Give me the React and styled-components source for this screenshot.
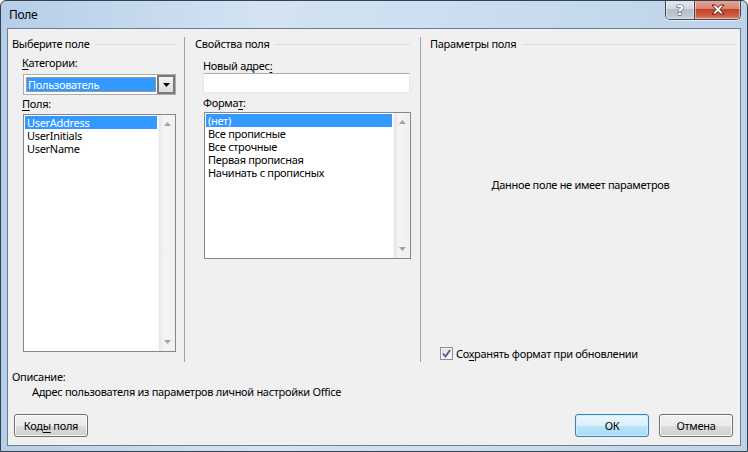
import React from "react";
import styled, { createGlobalStyle } from "styled-components";

const Global = createGlobalStyle`
  html, body { margin: 0; padding: 0; width: 748px; height: 452px; overflow: hidden; background: #fff; }
  * { box-sizing: border-box; }
  body { font-family: "Segoe UI", "Noto Sans", "Liberation Sans", sans-serif; font-size: 11px; letter-spacing: -0.3px; color: #000; }
`;

const Window = styled.div`
  width: 748px;
  height: 452px;
  border: 1px solid #34414f;
  border-radius: 6px 6px 0 0;
  background: linear-gradient(to right, #b6cee8 0%, #d3e3f3 35%, #c9dcef 70%, #bcd3ea 100%);
  display: flex;
  flex-direction: column;
  overflow: hidden;
`;

const TitleBar = styled.div`
  height: 27px;
  display: flex;
  align-items: flex-start;
  justify-content: space-between;
  padding-left: 8px;
  padding-right: 6px;
`;

const Title = styled.div`
  font-size: 12px;
  line-height: 14px;
  margin-top: 7px;
`;

const CaptionButtons = styled.div`
  display: flex;
  margin-top: -1px;
  border: 1px solid #3c4a5a;
  border-top: none;
  border-radius: 0 0 5px 5px;
  overflow: hidden;
  height: 20px;
  box-shadow: 0 1px 0 rgba(255,255,255,0.6);
`;

const CaptionButton = styled.div`
  height: 19px;
  width: ${p => p.$w}px;
  display: flex;
  align-items: center;
  justify-content: center;
  background: ${p => p.$close
    ? "linear-gradient(#e8a99a 0%, #d98572 45%, #c4432d 50%, #cf5a3e 80%, #e08a6a 100%)"
    : "linear-gradient(#e2e7ec 0%, #d2dae2 45%, #b3bfcb 50%, #bac6d2 80%, #c9d4df 100%)"};
  border-left: ${p => p.$close ? "1px solid #5a3a3a" : "none"};
  box-shadow: inset 0 0 0 1px rgba(255,255,255,0.45);
`;

const HelpGlyph = styled.span`
  font-family: "DejaVu Sans", sans-serif;
  font-weight: bold;
  font-size: 14px;
  line-height: 14px;
  letter-spacing: 0;
  color: #fff;
  -webkit-text-stroke: 1px #3d4b5c;
  paint-order: stroke fill;
`;

const Client = styled.div`
  margin: 0 6px;
  height: 418px;
  border: 1px solid #6e7e90;
  background: #f0f0f0;
  display: flex;
  flex-direction: column;
`;

const Panels = styled.div`
  margin-top: 8px;
  height: 325px;
  display: grid;
  grid-template-columns: 176px 236px 1fr;
`;

const Column = styled.div`
  display: flex;
  flex-direction: column;
  border-left: ${p => p.$sep ? "1px solid #a0a0a0" : "none"};
  padding-left: ${p => p.$pl}px;
  padding-right: ${p => p.$pr}px;
`;

const GroupHeading = styled.div`
  height: 14px;
  line-height: 14px;
  display: flex;
  align-items: center;
  gap: 6px;
  white-space: nowrap;
  &::after {
    content: "";
    flex: 1;
    height: 1px;
    background: #d5dfe5;
  }
`;

const Indent = styled.div`
  display: flex;
  flex-direction: column;
  padding-left: ${p => p.$pl}px;
`;

const Label = styled.div`
  height: 14px;
  line-height: 14px;
  margin-top: ${p => p.$mt}px;
  margin-bottom: ${p => p.$mb || 0}px;
  white-space: nowrap;
`;

const U = styled.span`
  text-decoration: underline;
  text-underline-offset: 2px;
`;

const Combo = styled.div`
  margin-left: 1px;
  width: 153px;
  height: 21px;
  border: 1px solid #abadb3;
  background: #fff;
  padding: 1px;
  display: flex;
  align-items: stretch;
`;

const ComboField = styled.div`
  flex: 1;
  margin: 1px;
  background: #3399ff;
  color: #fff;
  border: 1px dotted #e8a040;
  line-height: 13px;
  padding-left: 1px;
`;

const ComboButton = styled.div`
  width: 18px;
  border: 2px solid #7a7a7a;
  background: linear-gradient(#f4f4f4, #dcdcdc);
  display: flex;
  align-items: center;
  justify-content: center;
  margin: -1px -1px -1px 0;
`;

const ListBox = styled.div`
  margin-left: 1px;
  width: ${p => p.$w}px;
  height: ${p => p.$h}px;
  border: 1px solid #828790;
  background: #fff;
  display: flex;
  padding: 1px;
`;

const ListItems = styled.div`
  flex: 1;
  display: flex;
  flex-direction: column;
`;

const ListItem = styled.div`
  height: 13px;
  line-height: 13px;
  padding-left: 2px;
  white-space: nowrap;
  background: ${p => p.$sel ? "#3399ff" : "transparent"};
  color: ${p => p.$sel ? "#fff" : "#000"};
`;

const ScrollBar = styled.div`
  width: 17px;
  margin: -1px -1px -1px 1px;
  background: linear-gradient(to right, #e6e6e6, #f4f4f4 30%, #f0f0f0);
  border-left: 1px solid #f8f8f8;
  display: flex;
  flex-direction: column;
  justify-content: space-between;
  align-items: center;
  padding: 7px 0 7px;
`;

const TextInput = styled.div`
  width: 207px;
  height: 20px;
  border: 1px solid #e3e9ef;
  border-top-color: #abadb3;
  background: #fff;
`;

const Message = styled.div`
  margin-top: 127px;
  text-align: center;
  height: 14px;
  line-height: 14px;
  padding-right: 4px;
`;

const CheckRow = styled.div`
  margin-top: auto;
  margin-bottom: 2px;
  padding-left: 10px;
  display: flex;
  align-items: center;
  gap: 3px;
  height: 14px;
`;

const CheckBox = styled.div`
  width: 13px;
  height: 13px;
  border: 1px solid #8e8f8f;
  background: linear-gradient(135deg, #dcdcdc, #fbfbfb);
  display: flex;
  align-items: center;
  justify-content: center;
  box-shadow: inset 0 0 0 1px #f4f4f4;
`;

const DescTitle = styled.div`
  margin-top: 8px;
  padding-left: 4px;
  height: 14px;
  line-height: 14px;
`;

const DescText = styled.div`
  margin-top: 1px;
  padding-left: 24px;
  height: 14px;
  line-height: 14px;
`;

const ButtonRow = styled.div`
  margin-top: 15px;
  padding: 0 7px 0 6px;
  display: flex;
  align-items: center;
  gap: 10px;
`;

const Button = styled.div`
  width: 74px;
  height: 23px;
  border: 1px solid ${p => p.$focus ? "#3c7fb1" : "#707070"};
  border-radius: 3px;
  display: flex;
  align-items: center;
  justify-content: center;
  line-height: 14px;
  margin-left: ${p => p.$push ? "auto" : "0"};
  background: ${p => p.$focus
    ? "linear-gradient(#eaf6fd 0%, #d9f0fc 50%, #bee6fd 50%, #a7d9f5 100%)"
    : "linear-gradient(#f2f2f2 0%, #ebebeb 50%, #dddddd 50%, #cfcfcf 100%)"};
  box-shadow: inset 0 0 0 1px ${p => p.$focus ? "rgba(200,240,255,0.9)" : "rgba(255,255,255,0.8)"};
`;

const UpArrow = () => (
  <svg width="7" height="4" viewBox="0 0 7 4"><path d="M3.5 0 L7 4 L0 4 Z" fill="#a3a3a3" /></svg>
);
const DownArrow = () => (
  <svg width="7" height="4" viewBox="0 0 7 4"><path d="M0 0 L7 0 L3.5 4 Z" fill="#a3a3a3" /></svg>
);

export default function App() {
  return (
    <>
      <Global />
      <Window>
        <TitleBar>
          <Title>Поле</Title>
          <CaptionButtons>
            <CaptionButton $w={28}><HelpGlyph>?</HelpGlyph></CaptionButton>
            <CaptionButton $w={46} $close>
              <svg width="14" height="11" viewBox="0 0 14 11">
                <path d="M1 1 L4.5 1 L7 3.6 L9.5 1 L13 1 L9 5.5 L13 10 L9.5 10 L7 7.4 L4.5 10 L1 10 L5 5.5 Z"
                  fill="#fff" stroke="#4a2020" strokeWidth="1" strokeLinejoin="round" />
              </svg>
            </CaptionButton>
          </CaptionButtons>
        </TitleBar>
        <Client>
          <Panels>
            <Column $pl={4} $pr={8}>
              <GroupHeading>Выберите поле</GroupHeading>
              <Indent $pl={10}>
                <Label $mt={5} $mb={4}><U>К</U>атегории:</Label>
                <Combo>
                  <ComboField>Пользователь</ComboField>
                  <ComboButton>
                    <svg width="7" height="4" viewBox="0 0 7 4"><path d="M0 0 L7 0 L3.5 4 Z" fill="#000" /></svg>
                  </ComboButton>
                </Combo>
                <Label $mt={2} $mb={3}><U>П</U>оля:</Label>
                <ListBox $w={153} $h={238}>
                  <ListItems>
                    <ListItem $sel>UserAddress</ListItem>
                    <ListItem>UserInitials</ListItem>
                    <ListItem>UserName</ListItem>
                  </ListItems>
                  <ScrollBar><UpArrow /><DownArrow /></ScrollBar>
                </ListBox>
              </Indent>
            </Column>
            <Column $sep $pl={10} $pr={10}>
              <GroupHeading>Свойства поля</GroupHeading>
              <Indent $pl={8}>
                <Label $mt={8}>Новый адрес<U>:</U></Label>
                <TextInput />
                <Label $mt={3} $mb={2}>Форма<U>т</U>:</Label>
                <ListBox $w={207} $h={147}>
                  <ListItems>
                    <ListItem $sel>(нет)</ListItem>
                    <ListItem>Все прописные</ListItem>
                    <ListItem>Все строчные</ListItem>
                    <ListItem>Первая прописная</ListItem>
                    <ListItem>Начинать с прописных</ListItem>
                  </ListItems>
                  <ScrollBar><UpArrow /><DownArrow /></ScrollBar>
                </ListBox>
              </Indent>
            </Column>
            <Column $sep $pl={9} $pr={5}>
              <GroupHeading>Параметры поля</GroupHeading>
              <Message>Данное поле не имеет параметров</Message>
              <CheckRow>
                <CheckBox>
                  <svg width="9" height="9" viewBox="0 0 9 9">
                    <path d="M1 4.5 L3.5 7.5 L8 1" fill="none" stroke="#4a5f8a" strokeWidth="1.8" />
                  </svg>
                </CheckBox>
                <span>Со<U>х</U>ранять формат при обновлении</span>
              </CheckRow>
            </Column>
          </Panels>
          <DescTitle>Описание:</DescTitle>
          <DescText>Адрес пользователя из параметров личной настройки Office</DescText>
          <ButtonRow>
            <Button><span>Код<U>ы</U> поля</span></Button>
            <Button $push $focus><span>ОК</span></Button>
            <Button><span>Отмена</span></Button>
          </ButtonRow>
        </Client>
      </Window>
    </>
  );
}
